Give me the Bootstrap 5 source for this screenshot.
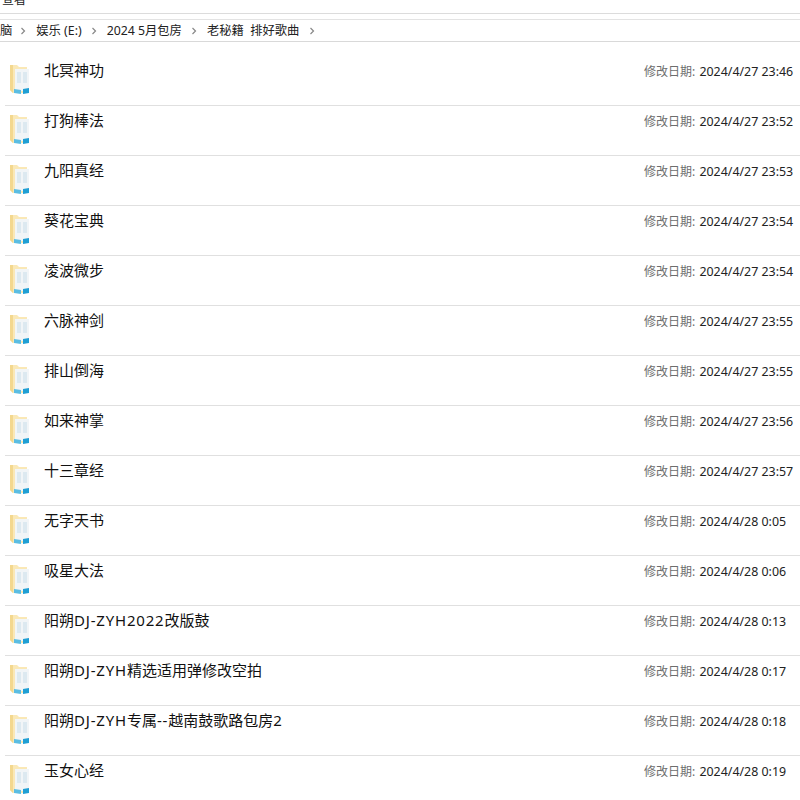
<!doctype html>
<html lang="zh"><head><meta charset="utf-8">
<link href="https://cdn.jsdelivr.net/npm/bootstrap@5.3.0/dist/css/bootstrap.min.css" rel="stylesheet">
<style>
html,body{height:800px;overflow:hidden;background:#fff}
body{font-family:"Noto Sans","Noto Sans CJK SC",sans-serif;color:#1a1a1a}
.tabbar{height:14px;border-bottom:1px solid #dcdcdc;font-size:12px;line-height:12px;padding-left:2px;overflow:hidden}
.tabbar span{display:block;margin-top:-6px}
.tabgap{height:5px}
.crumbs{height:23px;border-top:1px solid #e3e3e3;border-bottom:1px solid #d9d9d9;font-size:12.3px;line-height:20px;white-space:nowrap;color:#222}
.crumbs svg{flex:none}
.crumb-chev{margin:0 9.5px}
.chev-first{margin-left:8px;margin-right:10px}
.rows{margin:0 0 0 5px;list-style:none;padding:0}
.rowitem{height:50px;border-bottom:1px solid #e0e0e0}
.rowitem:first-child{height:64px;padding-top:14px}
.folder{flex:none;width:22px;height:34px;margin-left:4px;margin-top:7px}
.rowname{margin-left:13px;font-size:15px;line-height:20px;margin-top:4px;color:#111}
.rowname i{font-style:normal;letter-spacing:.8px}
.rowdate{font-size:12.4px;line-height:20px;margin-top:6px;margin-left:auto;width:156px;flex:none;white-space:nowrap;color:#222}
.rowdate em{font-style:normal;color:#6d6d6d;font-size:12px;margin-right:1px}
</style></head><body>
<div class="tabbar"><span>查看</span></div>
<div class="tabgap"></div>
<div class="crumbs d-flex align-items-center">
<span>脑</span><svg class="crumb-chev chev-first" width="6" height="8" viewBox="0 0 6 8"><path d="M1.5 1l3 3-3 3" fill="none" stroke="#888" stroke-width="1.2"/></svg>
<span>娱乐 (E:)</span><svg class="crumb-chev" width="6" height="8" viewBox="0 0 6 8"><path d="M1.5 1l3 3-3 3" fill="none" stroke="#888" stroke-width="1.2"/></svg>
<span>2024 5月包房</span><svg class="crumb-chev" width="6" height="8" viewBox="0 0 6 8"><path d="M1.5 1l3 3-3 3" fill="none" stroke="#888" stroke-width="1.2"/></svg>
<span>老秘籍&nbsp;&nbsp;排好歌曲</span><svg class="crumb-chev" width="6" height="8" viewBox="0 0 6 8"><path d="M1.5 1l3 3-3 3" fill="none" stroke="#888" stroke-width="1.2"/></svg>
</div>
<ul class="rows" id="r"></ul>
<script>
var d=[["北冥神功","2024/4/27 23:46"],["打狗棒法","2024/4/27 23:52"],["九阳真经","2024/4/27 23:53"],["葵花宝典","2024/4/27 23:54"],["凌波微步","2024/4/27 23:54"],["六脉神剑","2024/4/27 23:55"],["排山倒海","2024/4/27 23:55"],["如来神掌","2024/4/27 23:56"],["十三章经","2024/4/27 23:57"],["无字天书","2024/4/28 0:05"],["吸星大法","2024/4/28 0:06"],["阳朔DJ-ZYH2022改版鼓","2024/4/28 0:13"],["阳朔DJ-ZYH精选适用弹修改空拍","2024/4/28 0:17"],["阳朔DJ-ZYH专属--越南鼓歌路包房2","2024/4/28 0:18"],["玉女心经","2024/4/28 0:19"]];
var icon='<svg class="folder" viewBox="0 0 22 34"><path d="M1 2h7l2 2h8v26H4L1 27z" fill="#fae8b6"/><path d="M1 2h3v28L1 27z" fill="#f3d88f"/><path d="M6 6h14v22H6z" fill="#f1f5f7"/><path d="M8 9h4v11H8zM14 9h4v11h-4z" fill="#dce9f0"/><path d="M5 26l7 1v4l-7-1z" fill="#5bbde2"/><path d="M14 26l6-1v5l-6 1z" fill="#1f9fd4"/></svg>';
document.getElementById('r').innerHTML=d.map(function(x){return '<li class="rowitem d-flex">'+icon+'<div class="rowname">'+x[0].replace(/[A-Za-z0-9-]+/g,'<i>$&</i>')+'</div><div class="rowdate"><em>修改日期:</em> '+x[1]+'</div></li>'}).join('');
</script>
<script src="https://cdn.jsdelivr.net/npm/bootstrap@5.3.0/dist/js/bootstrap.bundle.min.js"></script>
</body></html>
